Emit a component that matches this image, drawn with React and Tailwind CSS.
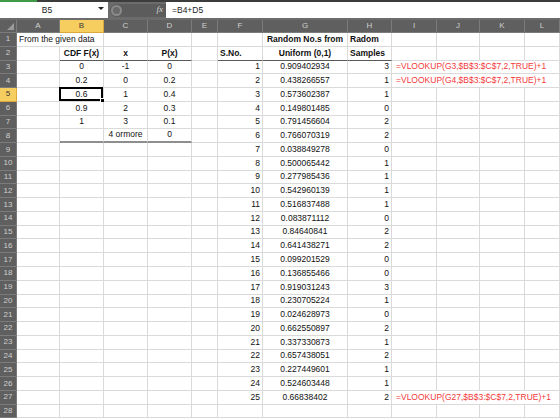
import React from "react";

const COLS =
  "grid grid-cols-[17px_43px_44px_44px_44px_26px_45px_85px_44px_45px_43px_45px_1fr]";
const LETTERS = ["A", "B", "C", "D", "E", "F", "G", "H", "I", "J", "K", "L"];

const randoms = [
  ["0.909402934", 3],
  ["0.438266557", 1],
  ["0.573602387", 1],
  ["0.149801485", 0],
  ["0.791456604", 2],
  ["0.766070319", 2],
  ["0.038849278", 0],
  ["0.500065442", 1],
  ["0.277985436", 1],
  ["0.542960139", 1],
  ["0.516837488", 1],
  ["0.083871112", 0],
  ["0.84640841", 2],
  ["0.641438271", 2],
  ["0.099201529", 0],
  ["0.136855466", 0],
  ["0.919031243", 3],
  ["0.230705224", 1],
  ["0.024628973", 0],
  ["0.662550897", 2],
  ["0.337330873", 1],
  ["0.657438051", 2],
  ["0.227449601", 1],
  ["0.524603448", 1],
  ["0.66838402", 2],
];

const table = [
  ["0", "-1", "0"],
  ["0.2", "0", "0.2"],
  ["0.6", "1", "0.4"],
  ["0.9", "2", "0.3"],
  ["1", "3", "0.1"],
  ["", "4 ormore", "0"],
];

// build the cell map: rows[r][col] = { t, align, bold, red, span, line }
const buildRows = () => {
  const rows = [];
  for (let r = 1; r <= 28; r++) rows[r] = {};
  rows[1].A = { t: "From the given data", align: "left", span: 2 };
  rows[1].G = { t: "Random No.s from", align: "center", bold: true };
  rows[1].H = { t: "Radom", align: "left", bold: true };
  rows[2].B = { t: "CDF F(x)", align: "center", bold: true, line: "dark" };
  rows[2].C = { t: "x", align: "center", bold: true, line: "dark" };
  rows[2].D = { t: "P(x)", align: "center", bold: true, line: "dark" };
  rows[2].F = { t: "S.No.", align: "left", bold: true, line: "dark" };
  rows[2].G = { t: "Uniform (0,1)", align: "center", bold: true, line: "dark" };
  rows[2].H = { t: "Samples", align: "left", bold: true, line: "dark" };
  table.forEach((vals, i) => {
    const r = i + 3;
    const line = r === 8 ? "thick" : undefined;
    rows[r].B = { t: vals[0], align: "center", line, selected: r === 5 };
    rows[r].C = { t: vals[1], align: "center", line };
    rows[r].D = { t: vals[2], align: "center", line };
  });
  randoms.forEach(([g, h], i) => {
    const r = i + 3;
    rows[r].F = { t: String(i + 1), align: "right" };
    rows[r].G = { t: g, align: "center" };
    rows[r].H = { t: String(h), align: "right" };
  });
  rows[3].I = { t: "=VLOOKUP(G3,$B$3:$C$7,2,TRUE)+1", align: "left", red: true, span: 4 };
  rows[4].I = { t: "=VLOOKUP(G4,$B$3:$C$7,2,TRUE)+1", align: "left", red: true, span: 4 };
  rows[27].I = { t: "=VLOOKUP(G27,$B$3:$C$7,2,TRUE)+1", align: "left", red: true, span: 4 };
  return rows;
};

const alignCls = {
  left: "justify-start pl-[2px]",
  center: "justify-center",
  right: "justify-end pr-[2px]",
};

const spanCls = { 1: "", 2: "col-span-2", 4: "col-span-4" };

const Cell = ({ cell }) => {
  const c = cell || {};
  let border = "border-b border-b-[#dadada]";
  if (c.line === "dark") border = "border-b border-b-[#5a5a5a]";
  if (c.line === "thick") border = "border-b-2 border-b-[#8e8e8e]";
  return (
    <div
      className={`relative flex items-end pb-[1px] whitespace-nowrap leading-[11px] border-r border-r-[#dadada] ${border} ${
        spanCls[c.span || 1]
      } ${alignCls[c.align || "left"]} ${c.bold ? "font-bold" : ""} ${
        c.red ? "text-[#f23a3a] pl-[4px]" : "text-[#111]"
      }`}
    >
      {c.t}
      {c.selected && (
        <div className="absolute -left-[1px] -top-[1px] right-0 bottom-0 border-2 border-black">
          <div className="absolute -right-[4px] -bottom-[4px] w-[5px] h-[5px] bg-black border border-white" />
        </div>
      )}
    </div>
  );
};

const Row = ({ r, cells }) => {
  const out = [];
  let i = 0;
  while (i < LETTERS.length) {
    const key = LETTERS[i];
    const cell = cells[key];
    out.push(<Cell key={key} cell={cell} />);
    i += cell && cell.span ? cell.span : 1;
  }
  return (
    <div className={`${COLS} h-[13.78px]`}>
      <div
        className={`flex items-center justify-center text-[8px] border-b border-r ${
          r === 5
            ? "bg-[#f6cd5f] text-[#3a3a3a] border-[#d9a93c]"
            : "bg-[#5f5f5f] text-[#cfcfcf] border-[#7b7b7b]"
        }`}
      >
        {r}
      </div>
      {out}
    </div>
  );
};

export default function App() {
  const rows = buildRows();
  return (
    <div className="w-[560px] h-[418px] overflow-hidden bg-white font-['Liberation_Sans',Arial,sans-serif] text-[8.5px]">
      {/* title strip */}
      <div className="flex h-[2px]">
        <div className="w-[37px] bg-[#3f9b45]" />
        <div className="flex-1 bg-[#3c3c3c]" />
      </div>

      {/* name box + formula bar */}
      <div className="flex h-[18px] bg-[#6c6c6c] pb-[2px]">
        <div className="relative w-[108px] bg-white flex items-center justify-center pr-[14px] text-[8.5px] text-[#222]">
          B5
          <span className="absolute right-[4px] top-[5px] w-0 h-0 border-l-[3px] border-r-[3px] border-t-[3px] border-l-transparent border-r-transparent border-t-[#222]" />
        </div>
        <div className="flex-1 flex items-center">
          <div className="w-[56px] h-[13px] ml-[2px] rounded-l-full bg-[#5c5c5c] flex items-center pl-[1px]">
            <div className="w-[11px] h-[11px] rounded-full bg-[#8a8a8a] flex items-center justify-center">
              <div className="w-[7px] h-[7px] rounded-full bg-[#6a6a6a]" />
            </div>
            <span className="ml-auto mr-[3px] font-['Liberation_Serif',serif] italic text-[9px] text-[#d6d6d6]">
              fx
            </span>
          </div>
          <div className="flex-1 h-full bg-white flex items-center pl-[6px] text-[8.5px] text-[#222]">
            =B4+D5
          </div>
        </div>
      </div>

      {/* column headers */}
      <div className={`${COLS} h-[13px] bg-[#5f5f5f]`}>
        <div className="relative border-r border-b border-[#7b7b7b]">
          <span className="absolute right-[2px] bottom-[2px] w-0 h-0 border-l-[7px] border-l-transparent border-b-[7px] border-b-[#9a9a9a]" />
        </div>
        {LETTERS.map((l) => (
          <div
            key={l}
            className={`flex items-center justify-center text-[8px] border-r border-b ${
              l === "B"
                ? "bg-[#f6cd5f] text-[#3a3a3a] border-[#d9a93c]"
                : "text-[#cfcfcf] border-[#7b7b7b]"
            }`}
          >
            {l}
          </div>
        ))}
      </div>

      {/* rows */}
      {rows.slice(1).map((cells, i) => (
        <Row key={i + 1} r={i + 1} cells={cells} />
      ))}
    </div>
  );
}
